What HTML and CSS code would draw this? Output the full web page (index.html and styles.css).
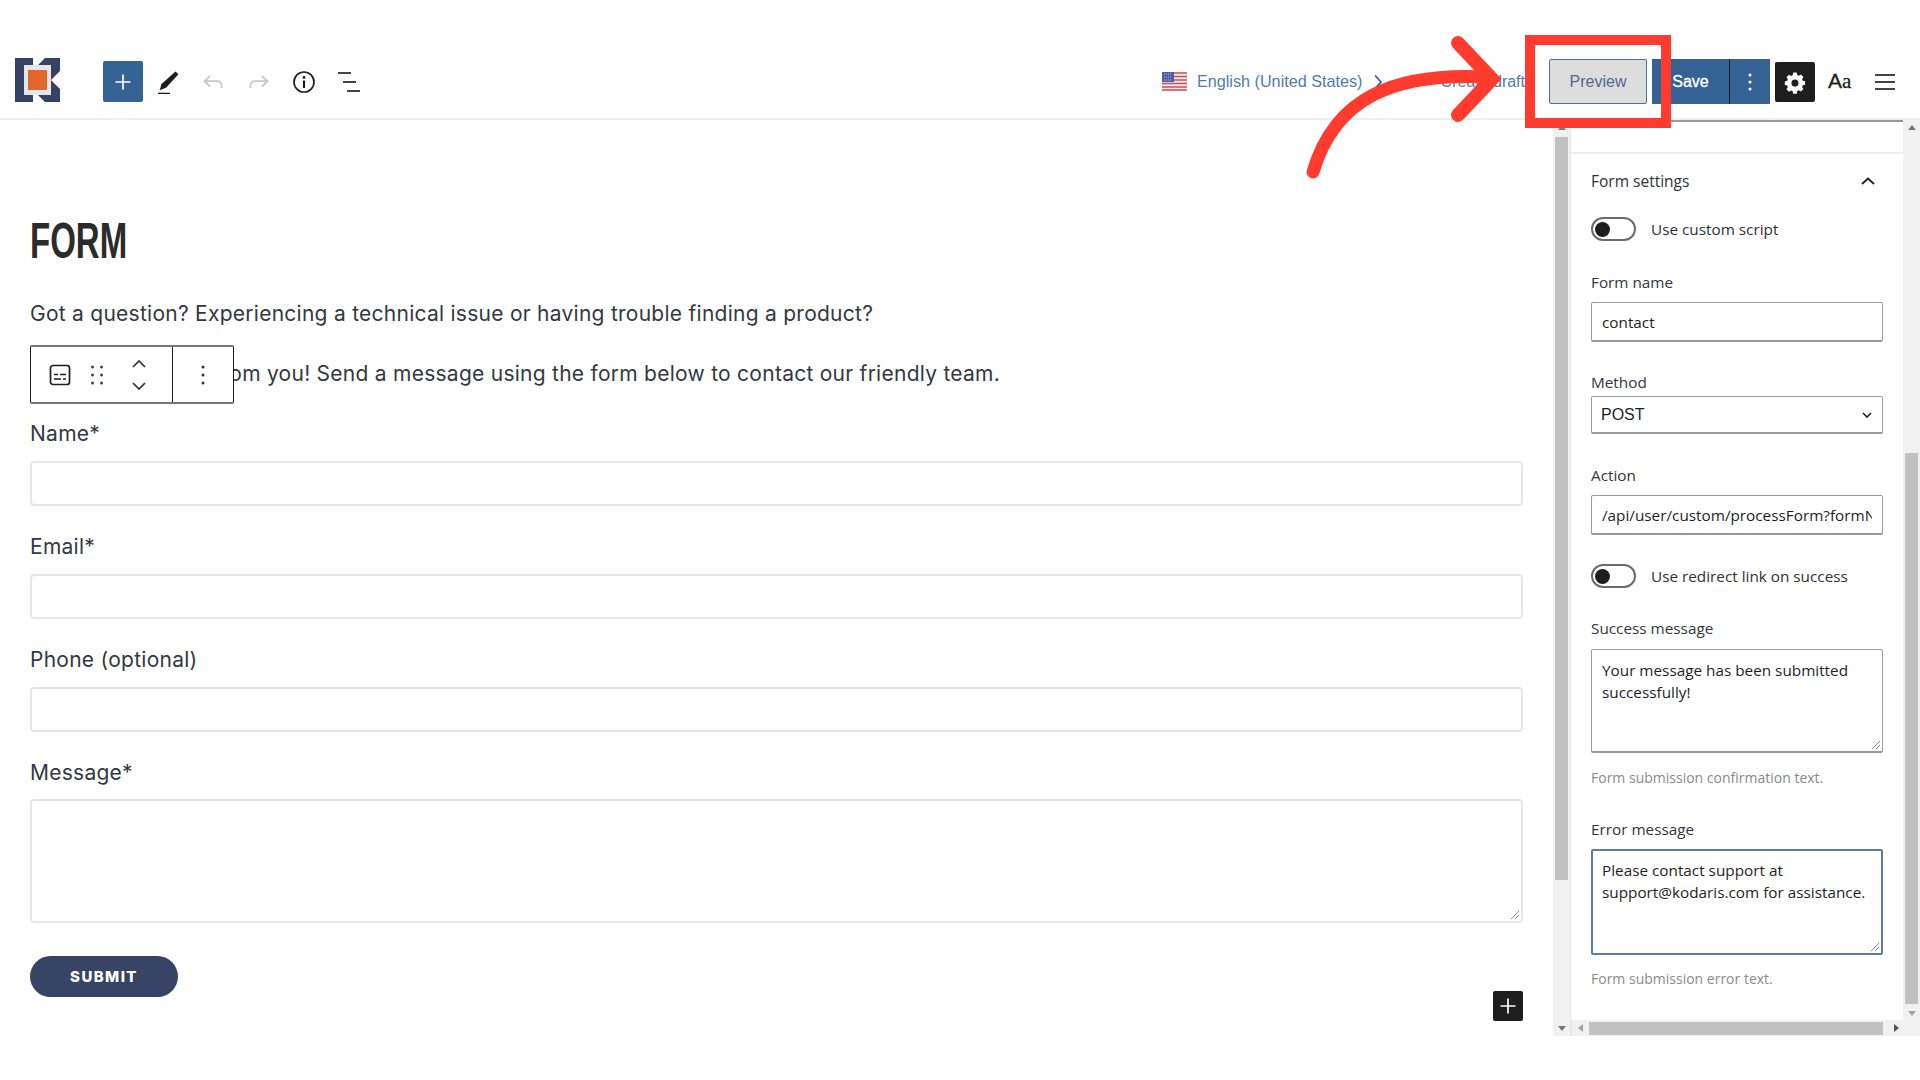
FILE: index.html
```html
<!DOCTYPE html>
<html lang="en">
<head>
<meta charset="utf-8">
<title>Form editor</title>
<link rel="stylesheet" href="styles.css">
</head>
<body>
<div class="app">
  <header class="topbar">
    <svg class="logo" viewBox="0 0 46 46" width="46" height="46">
      <path fill="#354365" d="M0 1h18v7H9v30h9v7H0z"/>
      <path fill="#354365" d="M30 1h15v13l-9 9 9 9v13H30l-7-7h13V8H23z"/>
      <rect x="9" y="8" width="27" height="30" fill="#e4e6ec"/>
      <rect x="13" y="13" width="19" height="20" fill="#e0662a"/>
    </svg>
    <button class="tool add" aria-label="Add">
      <svg viewBox="0 0 24 24" width="24" height="24"><path d="M12 4.500v15M4.500 12h15" stroke="#fff" stroke-width="1.700" fill="none"/></svg>
    </button>
    <svg class="ico pencil" viewBox="0 0 24 24" width="24" height="24"><path fill="#1e1e1e" d="M19.500 1.500l3 2.800-12.500 13.500-6.300 2.400 1.800-6.300z"/><path d="M2 23.500h12" stroke="#1e1e1e" stroke-width="1.600"/></svg>
    <svg class="ico undo" viewBox="0 0 24 24" width="24" height="24"><path d="M9 6l-5.500 5.200L9 16.500M4 11.200h12c3 0 4.500 2 4.500 4.800v2" stroke="#c8c8c8" stroke-width="1.800" fill="none"/></svg>
    <svg class="ico redo" viewBox="0 0 24 24" width="24" height="24"><path d="M15 6l5.500 5.200L15 16.500M20 11.200H8c-3 0-4.500 2-4.500 4.800v2" stroke="#c8c8c8" stroke-width="1.800" fill="none"/></svg>
    <svg class="ico info" viewBox="0 0 24 24" width="24" height="24"><circle cx="12" cy="12" r="10" stroke="#1e1e1e" stroke-width="1.700" fill="none"/><path d="M12 10.500v7.500" stroke="#1e1e1e" stroke-width="2.200"/><circle cx="12" cy="7.500" r="1.400" fill="#1e1e1e"/></svg>
    <svg class="ico list" viewBox="0 0 24 24" width="24" height="24"><path d="M1 3h13M6 12h13M10 21h13" stroke="#444" stroke-width="2" fill="none"/></svg>
    <div class="spacer"></div>
    <svg class="flag" viewBox="0 0 25 19" width="25" height="19"><rect width="25" height="19" rx="1" fill="#e8e8ee"/><path d="M0 1h25M0 4.500h25M0 8h25M0 11.500h25M0 15h25M0 18h25" stroke="#cf5256" stroke-width="1.700"/><rect width="12" height="10" fill="#4a5fa8"/><path d="M2 2h8M2 5h8M2 8h8" stroke="#b5c0e0" stroke-width="1" stroke-dasharray="1 1"/></svg>
    <span class="lang">English (United States)</span>
    <svg class="lang-chev" viewBox="0 0 10 16" width="10" height="16"><path d="M2 1.500l6 6.500-6 6.500" stroke="#356090" stroke-width="1.800" fill="none"/></svg>
    <span class="draft">Create draft</span>
    <button class="preview">Preview</button>
    <div class="savegroup">
      <button class="save">Save</button>
      <button class="savemore" aria-label="More">
        <svg viewBox="0 0 4 18" width="4" height="18"><circle cx="2" cy="2" r="1.500" fill="#fff"/><circle cx="2" cy="9" r="1.500" fill="#fff"/><circle cx="2" cy="16" r="1.500" fill="#fff"/></svg>
      </button>
    </div>
    <button class="gear" aria-label="Settings">
      <svg viewBox="0 0 24 24" width="24" height="24"><path fill="#fff" fill-rule="evenodd" d="M10 2h4l.6 2.800 1.700.8 2.500-1.400 2.800 2.900-1.500 2.400.7 1.700 2.700.7v4l-2.700.7-.7 1.700 1.500 2.400-2.800 2.900-2.500-1.400-1.700.8L14 26h-4l-.6-2.800-1.700-.8-2.500 1.400-2.800-2.900 1.500-2.400-.7-1.700L.5 16.100v-4l2.700-.7.7-1.700-1.500-2.400 2.800-2.900 2.500 1.400 1.700-.8zM12 10a4 4 0 1 0 0 8 4 4 0 0 0 0-8z" transform="translate(1.400 .8) scale(.88)"/></svg>
    </button>
    <span class="aa">A<span class="aa-small">a</span></span>
    <svg class="burger" viewBox="0 0 20 18" width="20" height="18"><path d="M0 2h20M0 9h20M0 16h20" stroke="#444" stroke-width="2"/></svg>
  </header>

  <main class="work">
    <section class="editor">
      <h1 class="title">FORM</h1>
      <p class="intro first">Got a question? Experiencing a technical issue or having trouble finding a product?</p>
      <p class="intro second">We'd love to hear from you! Send a message using the form below to contact our friendly team.</p>
      <label class="flabel">Name*</label>
      <div class="finput"></div>
      <label class="flabel">Email*</label>
      <div class="finput"></div>
      <label class="flabel">Phone (optional)</label>
      <div class="finput"></div>
      <label class="flabel">Message*</label>
      <div class="finput farea">
        <svg class="grip" viewBox="0 0 10 10" width="10" height="10"><path d="M9 1L1 9M9 5L5 9" stroke="#888" stroke-width="1" fill="none"/></svg>
      </div>
      <button class="submit">SUBMIT</button>

      <div class="blockbar">
        <div class="bb-main">
          <svg class="bb-form" viewBox="0 0 24 24" width="24" height="24"><rect x="2.500" y="2.500" width="19" height="19" rx="2.500" stroke="#1e1e1e" stroke-width="1.700" fill="none"/><path d="M6 11.500h4M12 11.500h6M6 16h7M15 16h3" stroke="#1e1e1e" stroke-width="1.500"/></svg>
          <svg class="bb-drag" viewBox="0 0 12 20" width="12" height="20"><g fill="#444"><circle cx="1.500" cy="2" r="1.500"/><circle cx="10.500" cy="2" r="1.500"/><circle cx="1.500" cy="10" r="1.500"/><circle cx="10.500" cy="10" r="1.500"/><circle cx="1.500" cy="18" r="1.500"/><circle cx="10.500" cy="18" r="1.500"/></g></svg>
          <svg class="bb-move" viewBox="0 0 16 32" width="16" height="32"><path d="M2 8l6-6 6 6M2 24l6 6 6-6" stroke="#333" stroke-width="1.700" fill="none"/></svg>
        </div>
        <div class="bb-more">
          <svg viewBox="0 0 4 20" width="4" height="20"><g fill="#333"><circle cx="2" cy="2" r="1.500"/><circle cx="2" cy="10" r="1.500"/><circle cx="2" cy="18" r="1.500"/></g></svg>
        </div>
      </div>
      <button class="blockadd" aria-label="Add block">
        <svg viewBox="0 0 18 18" width="18" height="18"><path d="M9 1.500v15M1.500 9h15" stroke="#fff" stroke-width="1.700"/></svg>
      </button>
    </section>

    <div class="vscroll editor-scroll">
      <span class="arrow up"></span>
      <span class="thumb"></span>
      <span class="arrow down"></span>
    </div>

    <aside class="sidewrap">
      <div class="sidemain">
        <div class="sidepanel">
          <div class="side-head">
            <span>Form settings</span>
            <svg viewBox="0 0 14 8" width="14" height="8"><path d="M1 7l6-5.500L13 7" stroke="#1e1e1e" stroke-width="1.800" fill="none"/></svg>
          </div>
          <div class="toggle-row first-toggle"><span class="toggle"><span class="knob"></span></span><span>Use custom script</span></div>
          <label class="slabel l-name">Form name</label>
          <div class="sinput">contact</div>
          <label class="slabel l-method">Method</label>
          <div class="sselect">POST
            <svg viewBox="0 0 10 6" width="10" height="6"><path d="M1 1l4 4 4-4" stroke="#1e1e1e" stroke-width="1.600" fill="none"/></svg>
          </div>
          <label class="slabel l-action">Action</label>
          <div class="sinput clipped"><span>/api/user/custom/processForm?formName=contact</span></div>
          <div class="toggle-row second-toggle"><span class="toggle"><span class="knob"></span></span><span>Use redirect link on success</span></div>
          <label class="slabel l-success">Success message</label>
          <div class="sarea">Your message has been submitted successfully!
            <svg class="grip" viewBox="0 0 10 10" width="10" height="10"><path d="M9 1L1 9M9 5L5 9" stroke="#888" stroke-width="1" fill="none"/></svg>
          </div>
          <p class="help">Form submission confirmation text.</p>
          <label class="slabel l-error">Error message</label>
          <div class="sarea focused">Please contact support at support@kodaris.com for assistance.
            <svg class="grip" viewBox="0 0 10 10" width="10" height="10"><path d="M9 1L1 9M9 5L5 9" stroke="#888" stroke-width="1" fill="none"/></svg>
          </div>
          <p class="help help-error">Form submission error text.</p>
        </div>
        <div class="vscroll side-scroll">
          <span class="arrow up"></span>
          <span class="thumb"></span>
          <span class="arrow down"></span>
        </div>
      </div>
      <div class="hscroll">
        <span class="arrow left"></span>
        <span class="hthumb"></span>
        <span class="arrow right"></span>
      </div>
    </aside>
  </main>
</div>

<svg class="annot" viewBox="0 0 1920 1080" width="1920" height="1080" aria-hidden="true">
  <rect x="1530" y="40" width="136" height="83" fill="none" stroke="#ff3b30" stroke-width="10"/>
  <path d="M1313 172C1335 97 1395 72 1488 77" fill="none" stroke="#ff3b30" stroke-width="13" stroke-linecap="round"/>
  <path d="M1458 43l34 36-34 36" fill="none" stroke="#ff3b30" stroke-width="14" stroke-linecap="round" stroke-linejoin="miter"/>
</svg>
</body>
</html>
```
FILE: styles.css
```css
* { box-sizing: border-box; }
html, body { margin: 0; padding: 0; background: #fff; }
body { width: 1920px; height: 1080px; overflow: hidden; position: relative; font-family: "Liberation Sans", Arial, sans-serif; color: #1e1e1e; }
button { font: inherit; cursor: default; }
p { margin: 0; }

.app { display: flex; flex-direction: column; height: 1036px; }

.topbar { height: 120px; flex: none; display: flex; align-items: center; padding: 45px 25px 0 15px; border-bottom: 2px solid #eeeeee; }
.logo { flex: none; margin-right: 42px; margin-top: -3px; }
.tool.add { width: 40px; height: 41px; flex: none; border: 0; border-radius: 2px; background: #356295; display: flex; align-items: center; justify-content: center; padding: 0; }
.ico { flex: none; }
.pencil { margin-left: 13px; }
.undo { margin-left: 21px; }
.redo { margin-left: 22px; }
.info { margin-left: 21px; }
.list { margin-left: 21px; }
.spacer { flex: 1; }
.flag { flex: none; margin-right: 10px; }
.lang { font-size: 16.200px; color: #4f7bb0; white-space: nowrap; }
.lang-chev { margin-left: 10px; flex: none; }
.draft { font-size: 16px; color: #4f7bb0; margin-left: 58px; white-space: nowrap; }
.preview { width: 98px; height: 45px; margin-left: 24px; border: 1.500px solid #4f6f94; border-radius: 2px; background: #dddddd; color: #4d6b8e; font-size: 16px; padding: 0; flex: none; }
.savegroup { display: flex; height: 45px; margin-left: 5px; flex: none; }
.save { width: 78px; border: 0; border-right: 1px solid #1e1e1e; background: #356295; color: #fff; font-size: 16px; font-weight: 400; padding: 0; -webkit-text-stroke: .3px #fff; }
.savemore { width: 40px; border: 0; background: #356295; padding: 0; display: flex; align-items: center; justify-content: center; }
.gear { width: 40px; height: 40px; margin-left: 5px; border: 0; border-radius: 2px; background: #1e1e1e; display: flex; align-items: center; justify-content: center; padding: 0; flex: none; }
.aa { font-family: "Liberation Sans", sans-serif; font-size: 21px; margin-left: 13px; width: 24px; color: #1e1e1e; flex: none; white-space: nowrap; -webkit-text-stroke: .3px #1e1e1e; }
.aa-small { font-family: "Liberation Serif", serif; }
.burger { margin-left: 23px; flex: none; }

.work { flex: 1; display: flex; min-height: 0; }

.editor { flex: 1; min-width: 0; padding: 0 30px; position: relative; font-family: Inter, "Noto Sans", sans-serif; color: #333a45; }
.title { margin: 97px 0 0; height: 48px; font-family: "Liberation Sans", sans-serif; font-weight: 700; font-size: 50px; line-height: 48px; color: #2b2b2b; transform-origin: left center; transform: scaleX(.66); }
.intro { height: 28px; padding-top: 1px; font-size: 21px; line-height: 28px; color: #33393f; letter-spacing: .26px; white-space: nowrap; }
.intro.first { margin-top: 34px; }
.intro.second { margin-top: 32px; }
.flabel { display: block; height: 28px; padding-top: 1px; font-size: 21px; letter-spacing: .26px; line-height: 28px; color: #33393f; }
.intro + .flabel { margin-top: 32px; }
.flabel + .finput { margin-top: 14px; }
.finput + .flabel { margin-top: 26px; }
.finput { height: 45px; border: 2px solid #e3e7ec; border-radius: 4px; position: relative; background: #fff; }
.flabel + .farea { margin-top: 13px; height: 124px; }
.grip { position: absolute; right: 1px; bottom: 1px; }
.submit { display: block; margin-top: 33px; width: 148px; height: 41px; border: 0; border-radius: 21px; background: #384466; color: #fff; font-family: Inter, sans-serif; font-weight: 800; font-size: 15px; letter-spacing: 1.400px; padding: 0; }

.blockbar { position: absolute; left: 30px; top: 225px; width: 204px; height: 59px; display: flex; background: #fff; border: 1px solid #1e1e1e; border-top: 2px solid #777; border-bottom: 2px solid #777; border-radius: 2px; }
.bb-main { width: 142px; border-right: 1px solid #1e1e1e; display: flex; align-items: center; padding-left: 17px; }
.bb-drag { margin-left: 19px; }
.bb-move { margin-left: 28px; }
.bb-more { flex: 1; display: flex; align-items: center; justify-content: center; }
.blockadd { position: absolute; right: 30px; top: 871px; width: 30px; height: 30px; border: 0; border-radius: 2px; background: #1e1e1e; padding: 0; display: flex; align-items: center; justify-content: center; }

.vscroll { width: 17px; flex: none; background: #f1f1f1; display: flex; flex-direction: column; align-items: center; position: relative; }
.thumb { width: 13px; background: #c1c1c1; display: block; }
.editor-scroll { border-right: 1px solid #e6e6e6; width: 18px; }
.editor-scroll .arrow.up { margin-top: 5px; }
.editor-scroll .thumb { margin-top: 7px; height: 743px; }
.side-scroll { height: 100%; }
.side-scroll .arrow.up { margin-top: 5px; }
.side-scroll .thumb { margin-top: 323px; height: 551px; }
.arrow { display: block; width: 0; height: 0; border-style: solid; }
.arrow.up { border-width: 0 4px 5px; border-color: transparent transparent #777; }
.arrow.down { border-width: 5px 4px 0; border-color: #777 transparent transparent; position: absolute; bottom: 5px; }
.side-scroll .arrow.down { border-top-color: #a3a3a3; bottom: 4px; }
.arrow.left { border-width: 4px 5px 4px 0; border-color: transparent #a3a3a3 transparent transparent; }
.arrow.right { border-width: 4px 0 4px 5px; border-color: transparent transparent transparent #555; }

.sidewrap { width: 349px; flex: none; display: flex; flex-direction: column; min-height: 0; }
.sidemain { flex: 1; min-height: 0; display: flex; }
.sidepanel { width: 332px; flex: none; font-family: "Open Sans", "Noto Sans", sans-serif; font-size: 15.300px; color: #2f3136; padding: 0 20px; position: relative; overflow: hidden; border-top: 2px solid #999; }
.sidepanel::before { content: ""; display: block; height: 30px; margin: 0 -20px; border-bottom: 2px solid #eeeeee; }
.side-head { display: flex; justify-content: space-between; align-items: center; font-size: 15.500px; height: 22px; margin-top: 16px; padding-right: 8px; }
.toggle-row { display: flex; align-items: center; gap: 15px; height: 24px; font-size: 15.300px; }
.first-toggle { margin-top: 25px; }
.second-toggle { margin-top: 29px; }
.toggle { width: 45px; height: 24px; border: 2px solid #6b6b6b; border-radius: 12px; display: flex; align-items: center; padding-left: 2px; flex: none; }
.knob { width: 15px; height: 15px; border-radius: 50%; background: #1e1e1e; display: block; }
.slabel { display: block; font-size: 15.300px; line-height: 20px; color: #33363b; }
.l-name { margin-top: 31px; }
.l-method { margin-top: 30px; }
.l-action { margin-top: 31px; }
.l-success { margin-top: 30px; }
.l-error { margin-top: 31px; }
.sinput { height: 40px; margin-top: 10px; border: 1px solid #9a9a9a; border-bottom-width: 2px; border-radius: 2px; padding: 0 10px; display: flex; align-items: center; font-size: 15.300px; color: #1e1e1e; }
.sselect { height: 38px; margin-top: 4px; border: 1px solid #9a9a9a; border-bottom-width: 2px; border-radius: 2px; padding: 0 10px 0 9px; display: flex; align-items: center; justify-content: space-between; font-family: "Liberation Sans", sans-serif; font-size: 16px; color: #1e1e1e; }
.clipped { overflow: hidden; white-space: nowrap; }
.clipped span { display: block; width: 270px; overflow: hidden; }
.sarea { height: 104px; margin-top: 11px; border: 1px solid #9a9a9a; border-bottom-width: 2px; border-radius: 2px; padding: 9px 10px; font-size: 15.300px; line-height: 22px; color: #1e1e1e; position: relative; }
.sarea.focused { height: 106px; margin-top: 10px; border: 2px solid #5b7ca5; padding: 8px 9px; }
.help { font-size: 14px; line-height: 20px; color: #8a8a8a; margin-top: 15px; }
.help-error { margin-top: 14px; }

.hscroll { height: 16px; flex: none; background: #f1f1f1; display: flex; align-items: center; border-left: 1px solid #e6e6e6; padding-left: 6px; position: relative; }
.hthumb { width: 294px; height: 13px; background: #c1c1c1; margin-left: 6px; display: block; }
.hscroll .arrow.right { margin-left: 11px; }

.annot { position: absolute; left: 0; top: 0; pointer-events: none; }
```
